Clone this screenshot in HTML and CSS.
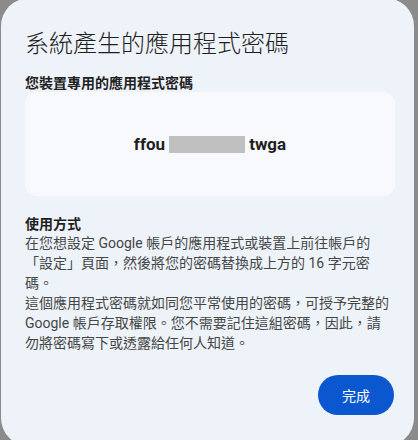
FILE: index.html
```html
<!DOCTYPE html>
<html lang="zh-Hant">
<head>
<meta charset="utf-8">
<title>系統產生的應用程式密碼</title>
<link rel="stylesheet" href="styles.css">
</head>
<body>
<div class="dialog">
  <h1 class="title">系統產生的應用程式密碼</h1>
  <h2 class="label">您裝置專用的應用程式密碼</h2>
  <div class="card">
    <div class="password">
      <span>ffou</span>
      <span class="redact"></span>
      <span>twga</span>
    </div>
  </div>
  <h3 class="label how">使用方式</h3>
  <p class="text">在您想設定 Google 帳戶的應用程式或裝置上前往帳戶的「設定」頁面，然後將您的密碼替換成上方的 16 字元密碼。</p>
  <p class="text">這個應用程式密碼就如同您平常使用的密碼，可授予完整的 Google 帳戶存取權限。您不需要記住這組密碼，因此，請勿將密碼寫下或透露給任何人知道。</p>
  <div class="actions">
    <button class="done">完成</button>
  </div>
</div>
</body>
</html>
```

FILE: styles.css
```css
html, body {
  margin: 0;
  padding: 0;
}
body {
  background: #8b8b8b;
  width: 418px;
  height: 440px;
  overflow: hidden;
  font-family: Roboto, "Noto Sans CJK TC", sans-serif;
}
.dialog {
  margin: -2px 0 0 1px;
  width: 413px;
  height: 448px;
  box-sizing: border-box;
  padding: 28px 20px 0 24px;
  border-radius: 28px;
  background: #eef2f9;
  display: flex;
  flex-direction: column;
}
.title {
  margin: 0 0 14px 0;
  font-size: 24px;
  line-height: 32px;
  font-weight: 300;
  color: #1f1f1f;
  font-family: "Noto Sans CJK TC", sans-serif;
}
.label {
  margin: 0;
  font-size: 14px;
  line-height: 20px;
  font-weight: 700;
  color: #1f1f1f;
  font-family: "Noto Sans CJK TC", sans-serif;
}
.card {
  height: 104px;
  width: 370px;
  border-radius: 12px;
  background: #f8f9fd;
  display: flex;
  align-items: center;
  justify-content: center;
}
.password {
  display: flex;
  align-items: center;
  gap: 4px;
  font-family: Roboto, sans-serif;
  font-weight: 700;
  font-size: 17px;
  color: #1f1f1f;
}
.redact {
  display: block;
  width: 76px;
  height: 17px;
  background: #c0c0c0;
}
.how {
  margin-top: 17px;
}
.text {
  margin: 0;
  font-size: 14px;
  line-height: 20px;
  color: #444746;
}
.actions {
  display: flex;
  justify-content: flex-end;
  margin-top: 22px;
}
.done {
  height: 40px;
  padding: 0 24px;
  border: none;
  border-radius: 20px;
  background: #0b57d0;
  color: #ffffff;
  font-size: 14px;
  font-family: "Noto Sans CJK TC", sans-serif;
}
```
